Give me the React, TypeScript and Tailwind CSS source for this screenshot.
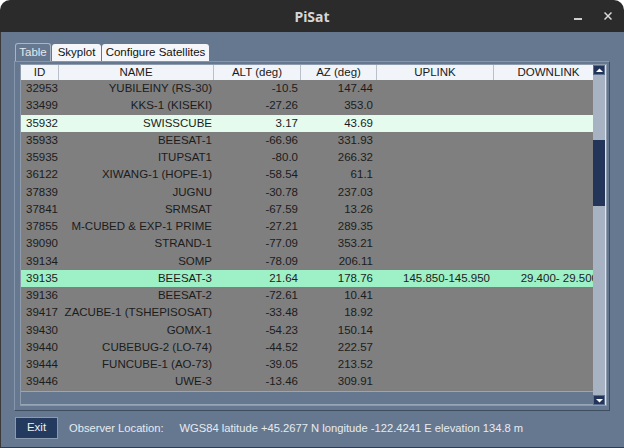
import React from "react";

interface ISatRow {
    id: string;
    name: string;
    alt: string;
    az: string;
    uplink?: string;
    downlink?: string;
    tone?: "light" | "green";
}

const rows: ISatRow[] = [
    { id: "32953", name: "YUBILEINY (RS-30)", alt: "-10.5", az: "147.44" },
    { id: "33499", name: "KKS-1 (KISEKI)", alt: "-27.26", az: "353.0" },
    { id: "35932", name: "SWISSCUBE", alt: "3.17", az: "43.69", tone: "light" },
    { id: "35933", name: "BEESAT-1", alt: "-66.96", az: "331.93" },
    { id: "35935", name: "ITUPSAT1", alt: "-80.0", az: "266.32" },
    { id: "36122", name: "XIWANG-1 (HOPE-1)", alt: "-58.54", az: "61.1" },
    { id: "37839", name: "JUGNU", alt: "-30.78", az: "237.03" },
    { id: "37841", name: "SRMSAT", alt: "-67.59", az: "13.26" },
    { id: "37855", name: "M-CUBED & EXP-1 PRIME", alt: "-27.21", az: "289.35" },
    { id: "39090", name: "STRAND-1", alt: "-77.09", az: "353.21" },
    { id: "39134", name: "SOMP", alt: "-78.09", az: "206.11" },
    {
        id: "39135",
        name: "BEESAT-3",
        alt: "21.64",
        az: "178.76",
        uplink: "145.850-145.950",
        downlink: "29.400- 29.500",
        tone: "green",
    },
    { id: "39136", name: "BEESAT-2", alt: "-72.61", az: "10.41" },
    { id: "39417", name: "ZACUBE-1 (TSHEPISOSAT)", alt: "-33.48", az: "18.92" },
    { id: "39430", name: "GOMX-1", alt: "-54.23", az: "150.14" },
    { id: "39440", name: "CUBEBUG-2 (LO-74)", alt: "-44.52", az: "222.57" },
    { id: "39444", name: "FUNCUBE-1 (AO-73)", alt: "-39.05", az: "213.52" },
    { id: "39446", name: "UWE-3", alt: "-13.46", az: "309.91" },
];

// largeurs des colonnes, la derniere depasse sous la barre de defilement
const cols = "grid grid-cols-[38px_155px_87px_76px_117px_110px]";

function HeaderCell({ label }: { label: string }) {
    return (
        <div className="flex items-center justify-center border-r border-[#b9c0c9] bg-[#f1f4f8] leading-none">
            {label}
        </div>
    );
}

function SatTable() {
    return (
        <div className="flex flex-1 min-h-0 border border-[#8e9bad]">
            <div className="flex-1 min-w-0 overflow-hidden bg-[#66788f] border-b border-[#98a6b8]">
                <div className={`${cols} h-[15px] w-max text-[#1a1a1a]`}>
                    <HeaderCell label="ID" />
                    <HeaderCell label="NAME" />
                    <HeaderCell label="ALT (deg)" />
                    <HeaderCell label="AZ (deg)" />
                    <HeaderCell label="UPLINK" />
                    <HeaderCell label="DOWNLINK" />
                </div>
                <div className="w-max border-b border-[#98a6b8]">
                    {rows.map((row) => (
                        <div
                            key={row.id}
                            className={`${cols} h-[17.25px] items-center text-[#1c1c1c] ${
                                row.tone === "light"
                                    ? "bg-[#e4fbee]"
                                    : row.tone === "green"
                                      ? "bg-[#9ef0c6]"
                                      : "bg-[#7f7f7f]"
                            }`}
                        >
                            <div className="pl-[5px]">{row.id}</div>
                            <div className="text-right pr-[2px] whitespace-nowrap">{row.name}</div>
                            <div className="text-right pr-[3px]">{row.alt}</div>
                            <div className="text-right pr-[4px]">{row.az}</div>
                            <div className="text-right pr-[4px]">{row.uplink}</div>
                            <div className="text-right pr-[6px] whitespace-nowrap">{row.downlink}</div>
                        </div>
                    ))}
                </div>
            </div>
            {/* barre de defilement */}
            <div className="flex w-[13px] flex-col bg-[#a7b3c2] border-r border-[#dde3ea]">
                <div className="flex h-[10px] items-center justify-center bg-[#22345a] border border-[#5d7091]">
                    <svg width="7" height="5" viewBox="0 0 7 5">
                        <path d="M0 4 L3.5 0.5 L7 4 Z" fill="#ffffff" />
                    </svg>
                </div>
                <div className="h-[65px]" />
                <div className="h-[66px] bg-[#23365a]" />
                <div className="flex-1" />
                <div className="flex h-[10px] items-center justify-center bg-[#22345a] border border-[#5d7091]">
                    <svg width="7" height="5" viewBox="0 0 7 5">
                        <path d="M0 1 L3.5 4.5 L7 1 Z" fill="#ffffff" />
                    </svg>
                </div>
            </div>
        </div>
    );
}

export default function App() {
    return (
        <div className="w-[624px] h-[448px] bg-white" style={{ fontFamily: "'Liberation Sans', Arial, sans-serif" }}>
            <div className="flex h-full flex-col overflow-hidden rounded-t-[10px] bg-[#2b2b2b]">
                <div className="relative flex h-[32px] shrink-0 items-center justify-center">
                    <span className="text-[14px] font-bold text-[#d6d6d6]" style={{ fontFamily: "'Noto Sans', sans-serif" }}>
                        PiSat
                    </span>
                    <div className="absolute right-[42px] top-[18px] h-[1.5px] w-[8px] bg-[#cfcfcf]" />
                    <svg className="absolute right-[12px] top-[12px]" width="8" height="8" viewBox="0 0 8 8">
                        <path d="M0.5 0.5 L7.5 7.5 M7.5 0.5 L0.5 7.5" stroke="#d8d8d8" strokeWidth="1.5" />
                    </svg>
                </div>
                <div className="flex flex-1 flex-col bg-[#66788f] border-l border-b border-[#3a3a3a] text-[11.5px]">
                    <div className="flex flex-col pl-[13px] pr-[14px] pt-[11px]">
                        <div className="flex h-[18px] items-end gap-[1px] pl-[1px]">
                            <div className="flex h-[18px] w-[36px] items-center justify-center rounded-t-[3px] border border-b-0 border-[#a9b5c4] text-[#e3e8ee]">
                                Table
                            </div>
                            <div className="flex h-[17px] w-[49px] items-center justify-center rounded-t-[3px] bg-[#f4f6f9] text-[#111]">
                                Skyplot
                            </div>
                            <div className="flex h-[17px] w-[107px] items-center justify-center rounded-t-[3px] bg-[#f4f6f9] text-[#111]">
                                Configure Satellites
                            </div>
                        </div>
                        <div className="flex h-[350px] flex-col border border-[#8797ab] border-r-[#3f4d60] border-b-[#3f4d60] pl-[5px] pr-[2px] pt-[2px] pb-[4px]">
                            <SatTable />
                        </div>
                    </div>
                    <div className="flex items-center pl-[14px] pt-[6px] text-[11.2px] text-[#e6ebf1]">
                        <div className="flex h-[22px] w-[43px] items-center justify-center bg-[#243a5f] border border-[#8a9ab0] text-[11.5px] text-[#eef2f6]">
                            Exit
                        </div>
                        <span className="ml-[11px]">Observer Location:</span>
                        <span className="ml-[16px]">WGS84 latitude +45.2677 N longitude -122.4241 E elevation 134.8 m</span>
                    </div>
                </div>
            </div>
        </div>
    );
}
